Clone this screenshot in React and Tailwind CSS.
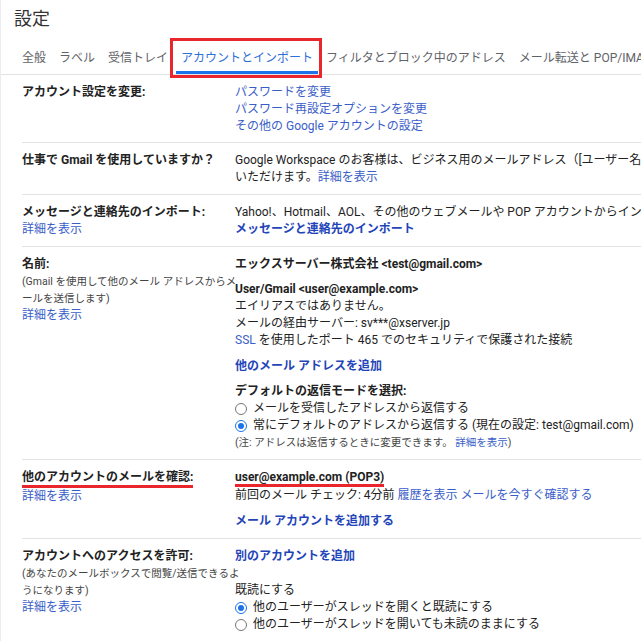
import React from "react";

const tabs = [
  "全般",
  "ラベル",
  "受信トレイ",
  "アカウントとインポート",
  "フィルタとブロック中のアドレス",
  "メール転送と POP/IMAP",
];

function Radio({ checked }) {
  return checked ? (
    <span className="inline-flex items-center justify-center w-[12px] h-[12px] rounded-full border border-[#1a73e8] mr-[6px] shrink-0">
      <span className="w-[6px] h-[6px] rounded-full bg-[#1a73e8]" />
    </span>
  ) : (
    <span className="inline-block w-[12px] h-[12px] rounded-full border border-[#777] mr-[6px] shrink-0" />
  );
}

function Row({ label, children, first, last }) {
  return (
    <div
      className={`flex ml-[21px] ${first ? "pt-[9px] pb-[7px]" : "pt-[9px] pb-[8px]"} ${
        last ? "" : "border-b border-[#e3e3e3]"
      }`}
    >
      <div className="w-[213px] shrink-0 whitespace-nowrap">{label}</div>
      <div className="flex-1 whitespace-nowrap">{children}</div>
    </div>
  );
}

const link = "text-[#3a5ec8]";
const boldLink = "text-[#1f45b8] font-bold";
const small = "text-[10.5px] text-[#444]";
const more = <div className={link}>詳細を表示</div>;

export default function App() {
  return (
    <div
      className="w-[641px] h-[641px] overflow-hidden bg-white text-[#222] text-[12px] leading-[17px] border-l border-[#ececec]"
      style={{ fontFamily: 'Roboto, "Noto Sans CJK JP", sans-serif' }}
    >
      <h1 className="pl-[13px] pt-[7px] text-[18px] leading-[24px] text-[#333]">設定</h1>

      {/* tab bar */}
      <div className="flex gap-[13px] pl-[21px] border-b border-[#e3e3e3] whitespace-nowrap text-[#5f6368]">
        {tabs.map((t) =>
          t === "アカウントとインポート" ? (
            <div
              key={t}
              className="relative -mx-[5px] px-[5px] pt-[19px] pb-[4px] border-b-[3px] border-[#1a73e8] text-[#2d6fd8]"
            >
              {t}
              <span className="absolute -left-[6px] -right-[4px] top-[7px] -bottom-[7px] border-[3px] border-[#e8262b]" />
            </div>
          ) : (
            <div key={t} className="pt-[19px] pb-[4px] border-b-[3px] border-transparent">
              {t}
            </div>
          )
        )}
      </div>

      <Row first label={<div className="font-bold">アカウント設定を変更:</div>}>
        <div className={link}>パスワードを変更</div>
        <div className={link}>パスワード再設定オプションを変更</div>
        <div className={link}>その他の Google アカウントの設定</div>
      </Row>

      <Row label={<div className="font-bold">仕事で Gmail を使用していますか？</div>}>
        <div>Google Workspace のお客様は、ビジネス用のメールアドレス（[ユーザー名]@[会社名].com）をご利用</div>
        <div>
          いただけます。<span className={link}>詳細を表示</span>
        </div>
      </Row>

      <Row
        label={
          <>
            <div className="font-bold">メッセージと連絡先のインポート:</div>
            {more}
          </>
        }
      >
        <div>Yahoo!、Hotmail、AOL、その他のウェブメールや POP アカウントからインポートします。</div>
        <div className={boldLink}>メッセージと連絡先のインポート</div>
      </Row>

      <Row
        label={
          <>
            <div className="font-bold">名前:</div>
            <div className={small}>(Gmail を使用して他のメール アドレスからメ</div>
            <div className={small}>ールを送信します)</div>
            {more}
          </>
        }
      >
        <div className="font-bold">エックスサーバー株式会社 &lt;test@gmail.com&gt;</div>
        <div className="font-bold mt-[8px]">User/Gmail &lt;user@example.com&gt;</div>
        <div>エイリアスではありません。</div>
        <div>メールの経由サーバー: sv***@xserver.jp</div>
        <div>
          <span className={link}>SSL</span> を使用したポート 465 でのセキュリティで保護された接続
        </div>
        <div className={`${boldLink} mt-[9px]`}>他のメール アドレスを追加</div>
        <div className="font-bold mt-[8px]">デフォルトの返信モードを選択:</div>
        <div className="flex items-center">
          <Radio />
          メールを受信したアドレスから返信する
        </div>
        <div className="flex items-center">
          <Radio checked />
          常にデフォルトのアドレスから返信する (現在の設定: test@gmail.com)
        </div>
        <div className={small}>
          (注: アドレスは返信するときに変更できます。 <span className={link}>詳細を表示</span>)
        </div>
      </Row>

      <Row
        label={
          <>
            <div className="font-bold">
              <span className="inline-block border-b-[3px] border-[#e8262b] leading-[15px]">
                他のアカウントのメールを確認:
              </span>
            </div>
            {more}
          </>
        }
      >
        <div className="font-bold">
          <span className="inline-block border-b-[3px] border-[#e8262b] leading-[14px]">
            user@example.com (POP3)
          </span>
        </div>
        <div>
          前回のメール チェック: 4分前 <span className={link}>履歴を表示</span>{" "}
          <span className={link}>メールを今すぐ確認する</span>
        </div>
        <div className={`${boldLink} mt-[9px]`}>メール アカウントを追加する</div>
      </Row>

      <Row
        last
        label={
          <>
            <div className="font-bold">アカウントへのアクセスを許可:</div>
            <div className={small}>(あなたのメールボックスで閲覧/送信できるよ</div>
            <div className={small}>うになります)</div>
            {more}
          </>
        }
      >
        <div className={boldLink}>別のアカウントを追加</div>
        <div className="mt-[17px]">既読にする</div>
        <div className="flex items-center">
          <Radio checked />
          他のユーザーがスレッドを開くと既読にする
        </div>
        <div className="flex items-center">
          <Radio />
          他のユーザーがスレッドを開いても未読のままにする
        </div>
      </Row>
    </div>
  );
}
